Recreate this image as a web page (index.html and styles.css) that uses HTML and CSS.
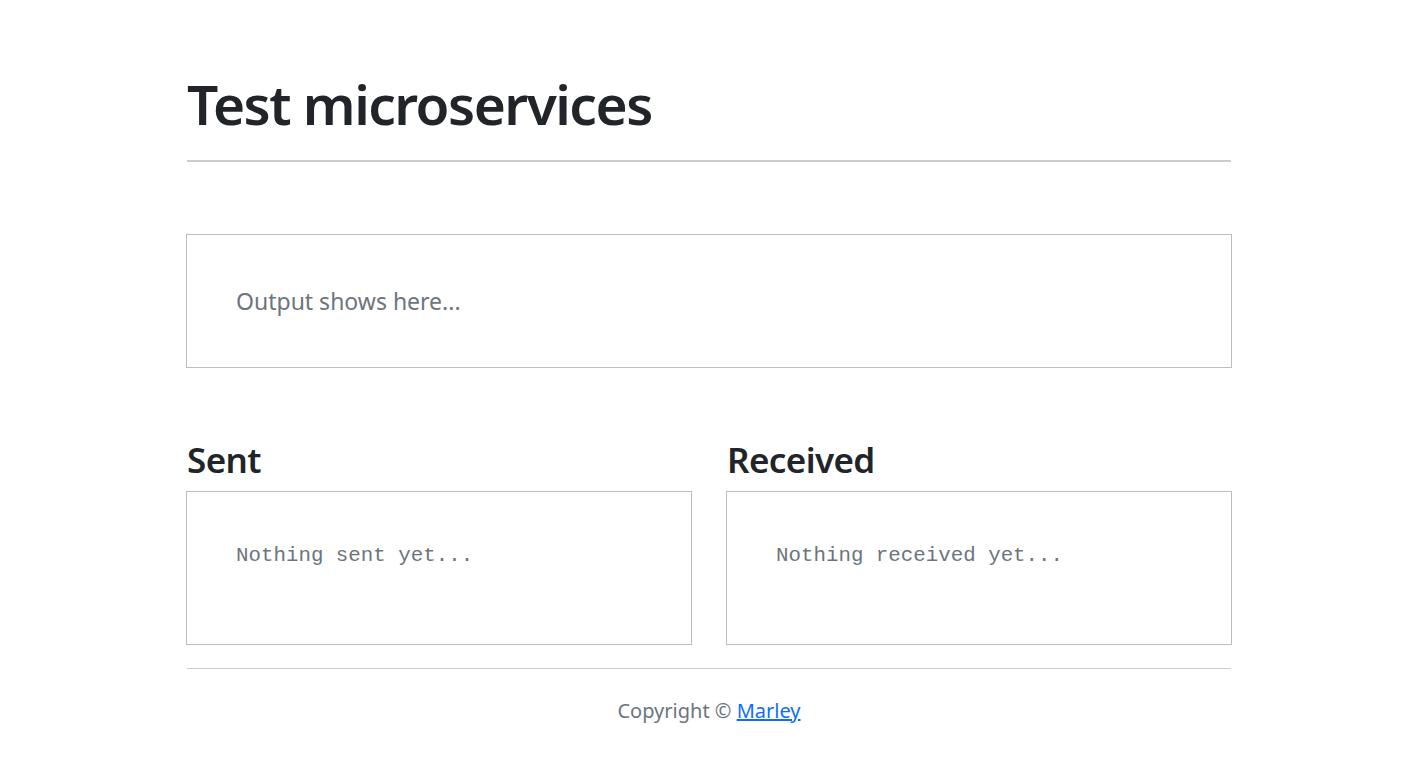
FILE: index.html
```html
<!DOCTYPE html>
<html lang="en">
<head>
<meta charset="utf-8">
<title>Test microservices</title>
<link rel="stylesheet" href="styles.css">
</head>
<body>
<main class="container">
  <header class="page-header">
    <h1 class="title">Test microservices</h1>
  </header>
  <hr class="rule rule-top">
  <section class="output-box">
    <p class="output-text">Output shows here...</p>
  </section>
  <section class="columns">
    <div class="column">
      <h2 class="col-title">Sent</h2>
      <div class="log-box">
        <pre class="log-text">Nothing sent yet...</pre>
      </div>
    </div>
    <div class="column">
      <h2 class="col-title">Received</h2>
      <div class="log-box">
        <pre class="log-text">Nothing received yet...</pre>
      </div>
    </div>
  </section>
  <hr class="rule rule-bottom">
  <footer class="footer">
    <p class="copyright">Copyright © <a href="#" class="footer-link">Marley</a></p>
  </footer>
</main>
</body>
</html>
```

FILE: styles.css
```css
* { box-sizing: border-box; }
html, body { margin: 0; padding: 0; background: #fff; }
body {
  font-family: "Noto Sans", "Open Sans", sans-serif;
  color: #212529;
}
.container {
  width: 1046px;
  margin: 0 auto;
  padding-top: 70px;
}
.title {
  margin: 0 0 0 1px;
  font-size: 55px;
  line-height: 67px;
  font-weight: 600;
  letter-spacing: -1.5px;
}
.rule {
  border: 0;
  border-top: 2px solid #cccccc;
  margin: 0 0 0 1px;
  width: 1044px;
}
.rule-top { margin-top: 23px; }
.output-box {
  margin-top: 72px;
  border: 1px solid #bdbdbd;
  height: 134px;
  padding: 0 49px;
  display: flex;
  align-items: center;
}
.output-text {
  margin: 0;
  font-size: 23px;
  color: #6c757d;
}
.columns {
  margin-top: 70px;
  display: grid;
  grid-template-columns: 1fr 1fr;
  gap: 34px;
}
.col-title {
  margin: 0 0 9px 1px;
  font-size: 35px;
  line-height: 44px;
  font-weight: 600;
  letter-spacing: -0.6px;
}
.log-box {
  border: 1px solid #bdbdbd;
  height: 154px;
  padding: 49px 49px 0;
}
.log-text {
  margin: 0;
  font-family: "Liberation Mono", "DejaVu Sans Mono", monospace;
  font-size: 20.8px;
  line-height: 30px;
  color: #6c757d;
}
.rule-bottom {
  margin-top: 23px;
  border-top-width: 1px;
}
.footer {
  text-align: center;
  padding-top: 28px;
}
.copyright {
  margin: 0;
  font-size: 20px;
  color: #6c757d;
}
.footer-link { color: #0d6efd; }
```
